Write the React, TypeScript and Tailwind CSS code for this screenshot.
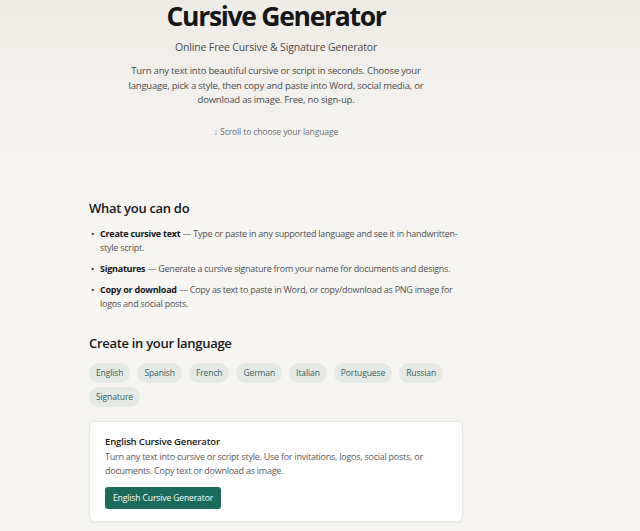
import React from "react";

const langs = ["English", "Spanish", "French", "German", "Italian", "Portuguese", "Russian", "Signature"];

export default function App() {
  return (
    <div className="min-h-screen bg-[#f6f5f2] text-[#1c1c1c]" style={{ fontFamily: '"Open Sans", "Noto Sans", sans-serif' }}>
      <div className="bg-gradient-to-b from-[#eeebe6] to-[#f6f5f2] pb-[42px]">
        <div className="ml-[89px] w-[374px] text-center">
          <h1 className="text-[26.5px] leading-[32px] font-bold tracking-[-1.3px] text-[#161616]">Cursive Generator</h1>
          <p className="mt-[8px] text-[10.5px] leading-[14px] tracking-[-0.15px] text-[#4a4a4a]">Online Free Cursive &amp; Signature Generator</p>
          <p className="mt-[10px] text-[9.5px] leading-[14.5px] tracking-[-0.2px] text-[#4a4a4a]">
            Turn any text into beautiful cursive or script in seconds. Choose your<br />language, pick a style, then copy and paste into Word, social media, or<br />download as image. Free, no sign-up.
          </p>
          <p className="mt-[18px] text-[8.5px] leading-[12px] tracking-[-0.1px] text-[#6f6f6f]">↓ Scroll to choose your language</p>
        </div>
      </div>
      <div className="ml-[89px] w-[374px] pt-[19px] pb-[20px]">
        <h2 className="text-[13px] leading-[18px] font-semibold tracking-[-0.3px] text-[#161616]">What you can do</h2>
        <ul className="mt-[10px] flex flex-col gap-[7px] text-[9px] leading-[14px] tracking-[-0.25px] text-[#4f4f4f]">
          <li className="flex">
            <span className="w-[11px] shrink-0 pl-[2px] text-[#1a1a1a]">•</span>
            <span><b className="font-bold text-[#161616]">Create cursive text</b> — Type or paste in any supported language and see it in handwritten-<br />style script.</span>
          </li>
          <li className="flex">
            <span className="w-[11px] shrink-0 pl-[2px] text-[#1a1a1a]">•</span>
            <span><b className="font-bold text-[#161616]">Signatures</b> — Generate a cursive signature from your name for documents and designs.</span>
          </li>
          <li className="flex">
            <span className="w-[11px] shrink-0 pl-[2px] text-[#1a1a1a]">•</span>
            <span><b className="font-bold text-[#161616]">Copy or download</b> — Copy as text to paste in Word, or copy/download as PNG image for<br />logos and social posts.</span>
          </li>
        </ul>
        <h2 className="mt-[23px] text-[13px] leading-[18px] font-semibold tracking-[-0.3px] text-[#161616]">Create in your language</h2>
        <div className="mt-[11px] flex flex-wrap gap-x-[7px] gap-y-[4px]">
          {langs.map((l) => (
            <span key={l} className="h-[20px] px-[7px] rounded-full bg-[#e4e9e6] text-[8.5px] leading-[20px] tracking-[-0.1px] text-[#35625f]">{l}</span>
          ))}
        </div>
        <div className="mt-[14px] rounded-[6px] bg-white border border-[#e9e7e2] shadow-[0_1px_3px_rgba(0,0,0,0.06)] px-[15px] pt-[13px] pb-[12px]">
          <h3 className="text-[9.5px] leading-[13px] font-semibold tracking-[-0.15px] text-[#161616]">English Cursive Generator</h3>
          <p className="mt-[2px] text-[9px] leading-[14px] tracking-[-0.25px] text-[#5a5a5a]">Turn any text into cursive or script style. Use for invitations, logos, social posts, or<br />documents. Copy text or download as image.</p>
          <button className="mt-[9px] h-[22px] px-[8px] rounded-[3px] bg-[#1b6b5c] text-white text-[8.5px] leading-[22px] tracking-[-0.1px]">English Cursive Generator</button>
        </div>
      </div>
    </div>
  );
}
